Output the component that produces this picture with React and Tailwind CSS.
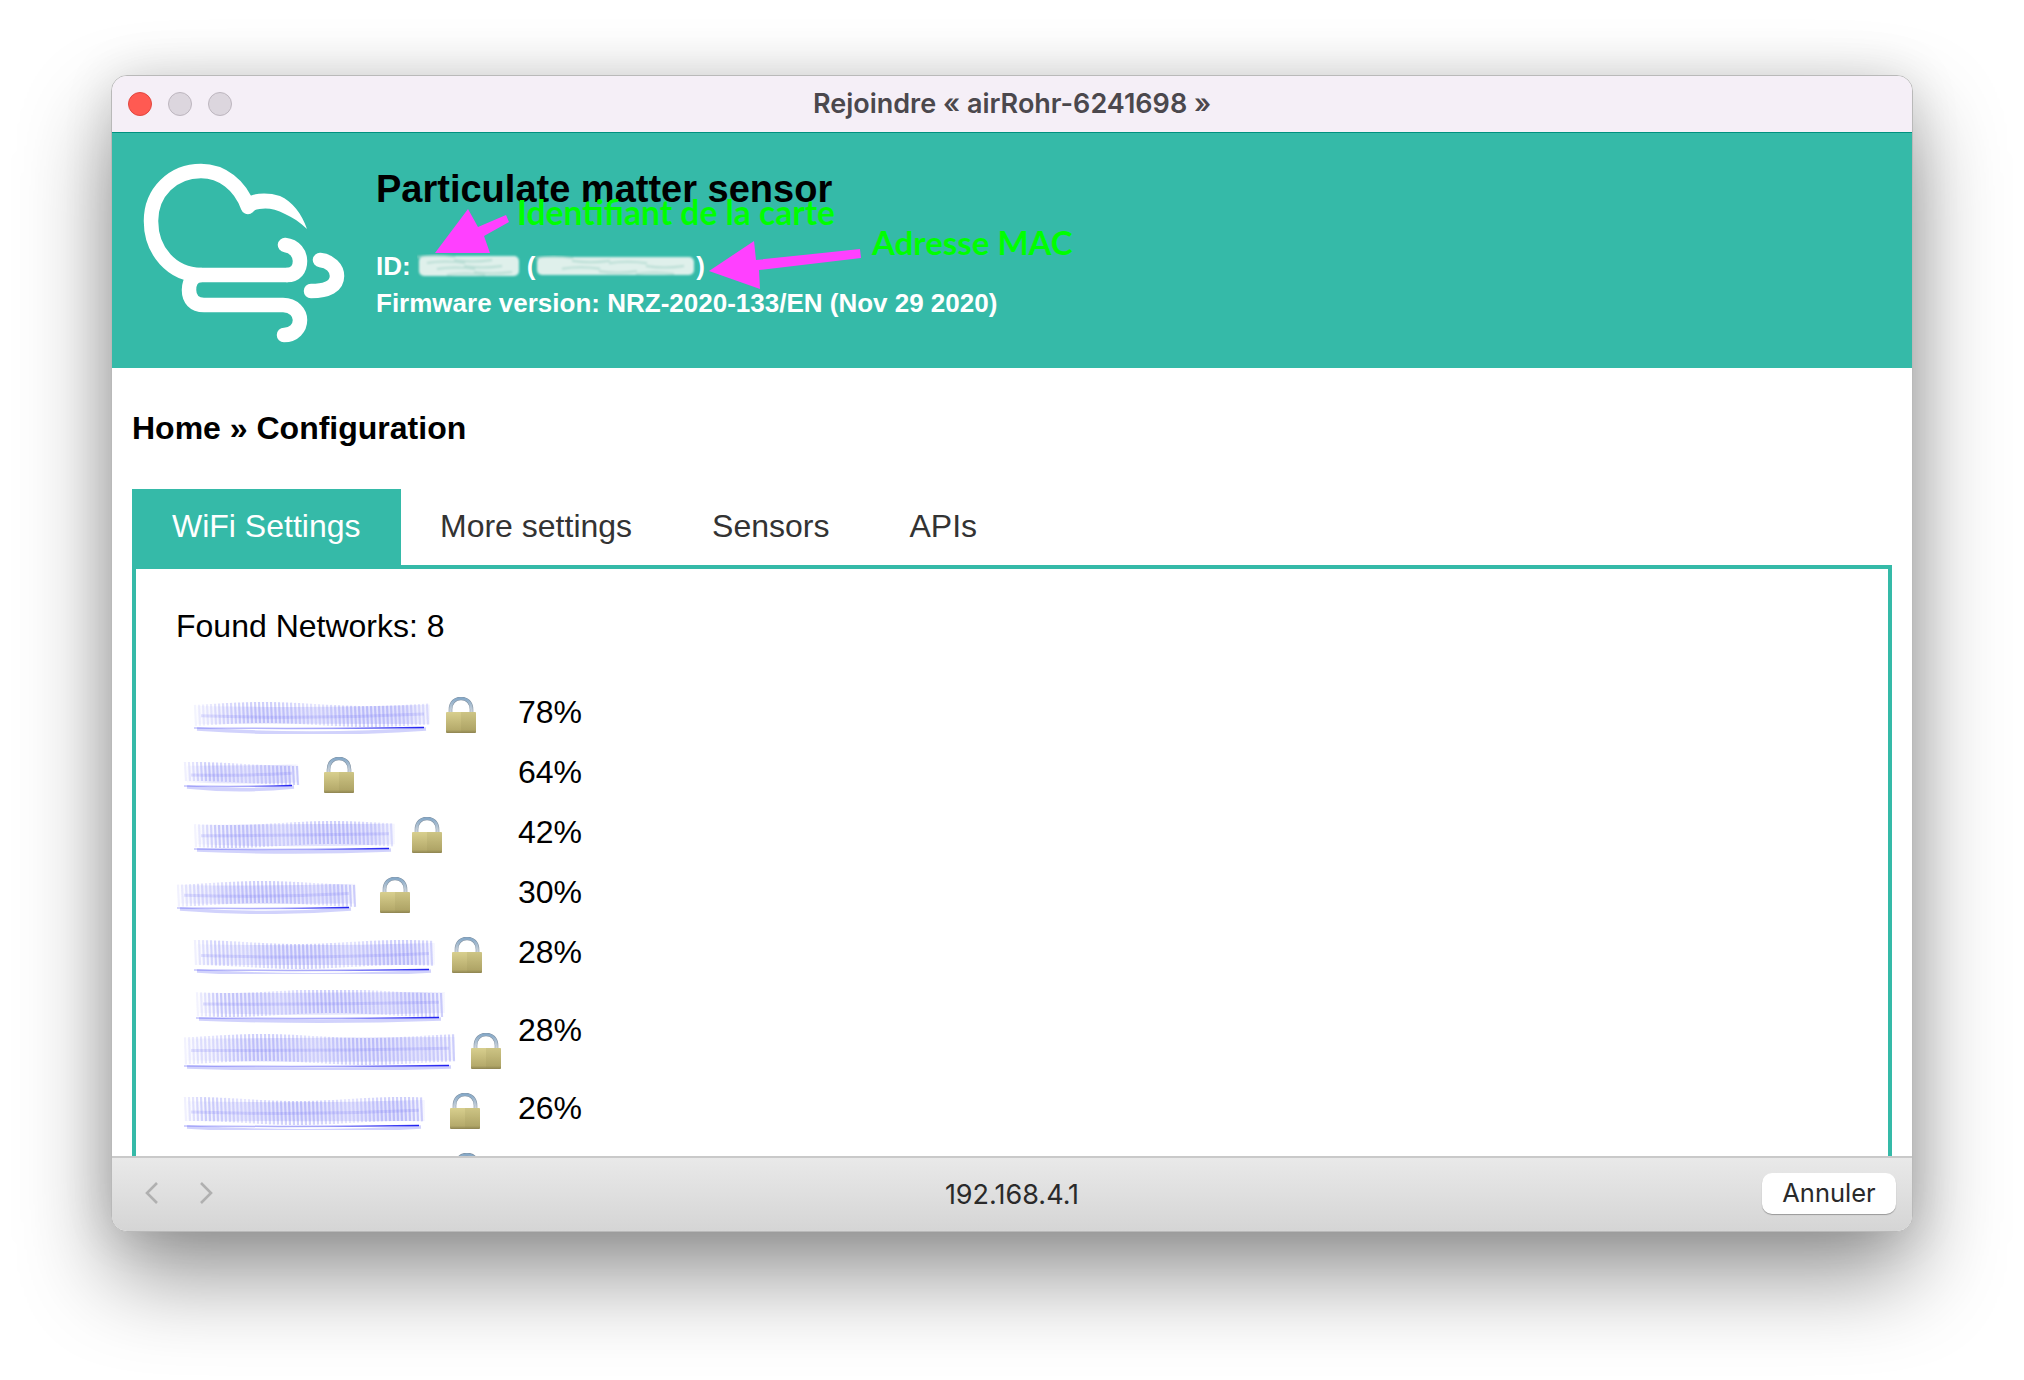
import React from 'react';

const networks = [
  { pct: '78%', lockX: 270, x0: 17, x1: 254, y0: 9, y1: 38, seed: 1, rowClass: 'h-[60px]' },
  { pct: '64%', lockX: 148, x0: 7, x1: 122, y0: 9, y1: 36, seed: 2, rowClass: 'h-[60px]' },
  { pct: '42%', lockX: 236, x0: 17, x1: 219, y0: 8, y1: 39, seed: 3, rowClass: 'h-[60px]' },
  { pct: '30%', lockX: 204, x0: 0, x1: 179, y0: 8, y1: 38, seed: 4, rowClass: 'h-[60px]' },
  { pct: '28%', lockX: 276, x0: 17, x1: 259, y0: 7, y1: 40, seed: 5, rowClass: 'h-[56px]' },
];

const lastNetwork = { pct: '26%', lockX: 274, x0: 7, x1: 249, y0: 8, y1: 40, seed: 8 };

// hand-scribbled SSID: ghosted stripes and a fading link underline
function Smear({ width, x0, x1, y0, y1, seed }) {
  const stripes = [];
  for (let x = x0 + 2; x < x1; x += 4) {
    const k = Math.sin(x * 0.03 + seed * 2.1);
    const edge = Math.min(1, (x - x0) / 30 + 0.25);
    stripes.push(
      <line key={x} x1={x} y1={y0 + 1 + k * 2} x2={x + 1} y2={y1 - 7 + k * 2} stroke="#4648f0" strokeOpacity={(0.14 + 0.12 * Math.abs(k)) * edge} strokeWidth="2.2" />
    );
  }
  const mid = (x0 + x1) / 2;
  const h = y1 - y0;
  const wave = 2 * Math.sin(seed * 1.7);
  return (
    <svg width={width} height="40" className="shrink-0 block">
      <defs>
        <linearGradient id={`fade${seed}`} x1="0" x2="1" y1="0" y2="0">
          <stop offset="0" stopColor="#4f50f2" stopOpacity="0.02" />
          <stop offset="0.25" stopColor="#4f50f2" stopOpacity="0.14" />
          <stop offset="0.9" stopColor="#4f50f2" stopOpacity="0.16" />
          <stop offset="1" stopColor="#4f50f2" stopOpacity="0.04" />
        </linearGradient>
        <linearGradient id={`line${seed}`} x1="0" x2="1" y1="0" y2="0">
          <stop offset="0" stopColor="#1414f0" stopOpacity="0.25" />
          <stop offset="0.6" stopColor="#1414f0" stopOpacity="0.4" />
          <stop offset="1" stopColor="#1414f0" stopOpacity="0.95" />
        </linearGradient>
      </defs>
      <g className="blur-[0.6px]">
        {stripes}
        <path d={`M${x0 + 4} ${y0 + h * 0.1} Q${mid} ${y0 + h * 0.12 + wave} ${x1} ${y0 + h * 0.06} V${y0 + h * 0.72} Q${mid} ${y0 + h * 0.78 - wave} ${x0 + 4} ${y0 + h * 0.72} Z`} fill={`url(#fade${seed})`} />
        <path d={`M${x0 + 8} ${y0 + h * 0.44} Q${mid} ${y0 + h * 0.5 + wave} ${x1 - 6} ${y0 + h * 0.38}`} fill="none" stroke="#4f50f2" strokeOpacity="0.14" strokeWidth="3" />
        <path d={`M${x0 + 4} ${y1 - 3} Q${mid} ${y1 + 3 + wave} ${x1 - 4} ${y1 - 3}`} fill="none" stroke="#7c7ef6" strokeOpacity="0.35" strokeWidth="3.5" />
      </g>
      <path d={`M${x0 + 1} ${y1 - 4} Q${mid} ${y1 - 3} ${x1 - 6} ${y1 - 4.5}`} fill="none" stroke={`url(#line${seed})`} strokeWidth="1.5" />
    </svg>
  );
}

function Lock() {
  return (
    <svg width="30" height="36" viewBox="0 0 30 36" className="shrink-0 block">
      <defs>
        <linearGradient id="lockBody" x1="0" x2="0" y1="0" y2="1">
          <stop offset="0" stopColor="#d8cf8e" />
          <stop offset="0.85" stopColor="#b5aa6b" />
          <stop offset="1" stopColor="#8d8350" />
        </linearGradient>
        <linearGradient id="lockBar" x1="0" x2="0" y1="0" y2="1">
          <stop offset="0" stopColor="#86a9c8" />
          <stop offset="1" stopColor="#d5d8dc" />
        </linearGradient>
      </defs>
      <path d="M4.5 16V12.5C4.5 5.5 9 1.5 15 1.5S25.5 5.5 25.5 12.5V16" fill="none" stroke="#7f8f9f" strokeWidth="3.6" />
      <path d="M4.5 16V12.5C4.5 5.5 9 1.5 15 1.5S25.5 5.5 25.5 12.5V16" fill="none" stroke="url(#lockBar)" strokeWidth="2.6" />
      <rect x="0" y="15" width="30" height="21" rx="1" fill="url(#lockBody)" />
      <rect x="15" y="15" width="15" height="21" fill="#8f8550" fillOpacity="0.14" />
    </svg>
  );
}

// blurred-out value in the header
function Smudge({ width, height }) {
  const streaks = [];
  for (let i = 0; i < 7; i++) {
    const y = 3 + (i * (height - 6)) / 6;
    const x = (i * 37) % (width - 40);
    streaks.push(<path key={i} d={`M${x} ${y} q18 ${i % 2 ? 3 : -3} 38 0`} fill="none" stroke="#a9d6cc" strokeOpacity="0.7" strokeWidth="2" />);
  }
  return (
    <svg width={width} height={height} className="shrink-0 block">
      <g className="blur-[1.3px]">
        <rect x="2" y="2" width={width - 4} height={height - 4} rx="5" fill="#dff0eb" />
        {streaks}
      </g>
    </svg>
  );
}

function NetworkRow({ n }) {
  return (
    <div className={`flex items-start ${n.rowClass || 'h-[60px]'}`}>
      <div className="w-[342px] flex items-end">
        <Smear width={n.lockX} x0={n.x0} x1={n.x1} y0={n.y0} y1={n.y1} seed={n.seed} />
        <div className="mb-[1px]"><Lock /></div>
      </div>
      <div className="leading-[36px]">{n.pct}</div>
    </div>
  );
}

function CloudLogo() {
  return (
    <svg viewBox="140 160 210 190" className="w-[210px] h-[190px] shrink-0" fill="none" stroke="#fff" strokeWidth="14.5" strokeLinecap="round" strokeLinejoin="round">
      <path d="M287 275H201C172 275 151 251 151 221C151 192 173 171 201 171C222 171 240 185 248 207" />
      <path d="M247 197C255 193 268 192 280 196C292 201 302 214 307 229C300 222 292 217 285 214C270 206 258 208 248 213Z" fill="#fff" stroke="none" />
      <path d="M285 245C295 246 300 254 300 261C300 269 296 275 287 275" />
      <path d="M320 260C330 261 337 268 337 276C337 286 328 291 311 291" />
      <path d="M201 275C194 275 189 281 189 290C189 299 194 305 204 305H283C294 305 300 313 300 320C300 328 294 335 284 335" />
    </svg>
  );
}

export default function App() {
  return (
    <div className="w-[2024px] h-[1380px] overflow-hidden bg-white pt-[75px] px-[111px]" style={{ fontFamily: '"Liberation Sans", Arial, sans-serif' }}>
      <div className="h-[1157px] flex flex-col rounded-[16px] overflow-hidden border border-[#b9b9b9] shadow-[0_44px_90px_rgba(0,0,0,0.42),0_0_50px_rgba(0,0,0,0.12)] bg-white">
        {/* title bar */}
        <div className="h-[57px] shrink-0 relative flex items-center justify-center bg-[#f5eff7] border-b border-[#00917f]">
          <div className="absolute left-[16px] top-[16px] flex gap-4">
            <span className="w-6 h-6 rounded-full bg-[#ff5a52] border border-[#e2463f]" />
            <span className="w-6 h-6 rounded-full bg-[#dcd6de] border border-[#bdb6bf]" />
            <span className="w-6 h-6 rounded-full bg-[#dcd6de] border border-[#bdb6bf]" />
          </div>
          <div className="text-[27px] font-semibold text-[#4b484d]" style={{ fontFamily: 'Inter, sans-serif' }}>Rejoindre « airRohr-6241698 »</div>
        </div>

        {/* sensor header */}
        <div className="h-[235px] shrink-0 relative flex bg-[#35baa8] pl-[28px] pt-[27px]">
          <CloudLogo />
          <div className="ml-[26px] pt-[6px]">
            <h1 className="text-[38px] leading-[46px] font-bold text-black">Particulate matter sensor</h1>
            <div className="mt-[36px] text-[26px] leading-[36px] font-bold text-white flex items-center">
              <span>ID:</span>
              <span className="ml-[6px]"><Smudge width={104} height={24} /></span>
              <span className="ml-[6px]">(</span>
              <Smudge width={161} height={22} />
              <span>)</span>
            </div>
            <div className="mt-[1px] text-[26px] leading-[36px] font-bold text-white">Firmware version: NRZ-2020-133/EN (Nov 29 2020)</div>
          </div>

          {/* annotations drawn over the screenshot */}
          <svg viewBox="112 133 1800 235" className="absolute inset-0 w-full h-full pointer-events-none">
            <polygon fill="#ff40ff" points="468,209 435,253 490,253 484,236 509,222 506,215 478,227" />
            <polygon fill="#ff40ff" points="709,271 754,241 756,260 860,249 861,258 759,270 760,289" />
          </svg>
          <span className="absolute left-[405px] top-[57px] text-[33.6px] leading-[44px] font-bold text-[#00ff00]" style={{ fontFamily: 'Lato, sans-serif' }}>Identifiant de la carte</span>
          <span className="absolute left-[760px] top-[87px] text-[33px] leading-[44px] font-bold text-[#00ff00]" style={{ fontFamily: 'Lato, sans-serif' }}>Adresse MAC</span>
        </div>

        {/* page body */}
        <div className="flex-1 min-h-0 overflow-hidden px-5 text-black text-[32px]">
          <div className="mt-[41px] text-[32px] leading-[38px] font-bold">Home » Configuration</div>
          <div className="mt-[42px] flex h-[76px]">
            <div className="w-[269px] pl-10 pb-[3px] flex items-center bg-[#35baa8] text-white">WiFi Settings</div>
            <div className="pl-[39px] pr-10 pb-[3px] flex items-center text-[#333]">More settings</div>
            <div className="px-10 pb-[3px] flex items-center text-[#333]">Sensors</div>
            <div className="px-10 pb-[3px] flex items-center text-[#333]">APIs</div>
          </div>
          <div className="border-4 border-[#35baa8] px-10 pt-[37px] h-[700px]">
            <div className="leading-[40px]">Found Networks: 8</div>
            <div className="mt-[48px]">
              {networks.map(n => <NetworkRow key={n.seed} n={n} />)}
              <div className="flex items-start h-[100px]">
                <div className="w-[342px]">
                  <Smear width={270} x0={19} x1={269} y0={0} y1={32} seed={6} />
                  <div className="flex items-end">
                    <Smear width={295} x0={7} x1={279} y0={5} y1={40} seed={7} />
                    <div className="mb-[1px]"><Lock /></div>
                  </div>
                </div>
                <div className="leading-[36px] pt-[22px]">28%</div>
              </div>
              <NetworkRow n={lastNetwork} />
              <NetworkRow n={{ pct: '24%', lockX: 276, x0: 7, x1: 240, y0: 8, y1: 40, seed: 9 }} />
            </div>
          </div>
        </div>

        {/* bottom bar */}
        <div className="h-[75px] shrink-0 relative flex items-center justify-center border-t-2 border-[#c9c9c9] bg-gradient-to-b from-[#e9e9e9] to-[#d5d5d5]">
          <svg viewBox="0 0 72 24" className="absolute left-[32px] top-[23px] w-[72px] h-[24px]" fill="none" stroke="#b0b0b0" strokeWidth="2.6">
            <path d="M13 2L3 12L13 22" />
            <path d="M57 2L67 12L57 22" />
          </svg>
          <div className="text-[27px] text-[#2a2a2a] pt-[2px]" style={{ fontFamily: 'Inter, sans-serif' }}>192.168.4.1</div>
          <button className="absolute right-[16px] top-[15px] w-[134px] h-[41px] rounded-[10px] bg-white text-[25.5px] text-[#2a2a2a] shadow-[0_1px_1px_rgba(0,0,0,0.3)]" style={{ fontFamily: 'Inter, sans-serif' }}>Annuler</button>
        </div>
      </div>
    </div>
  );
}
